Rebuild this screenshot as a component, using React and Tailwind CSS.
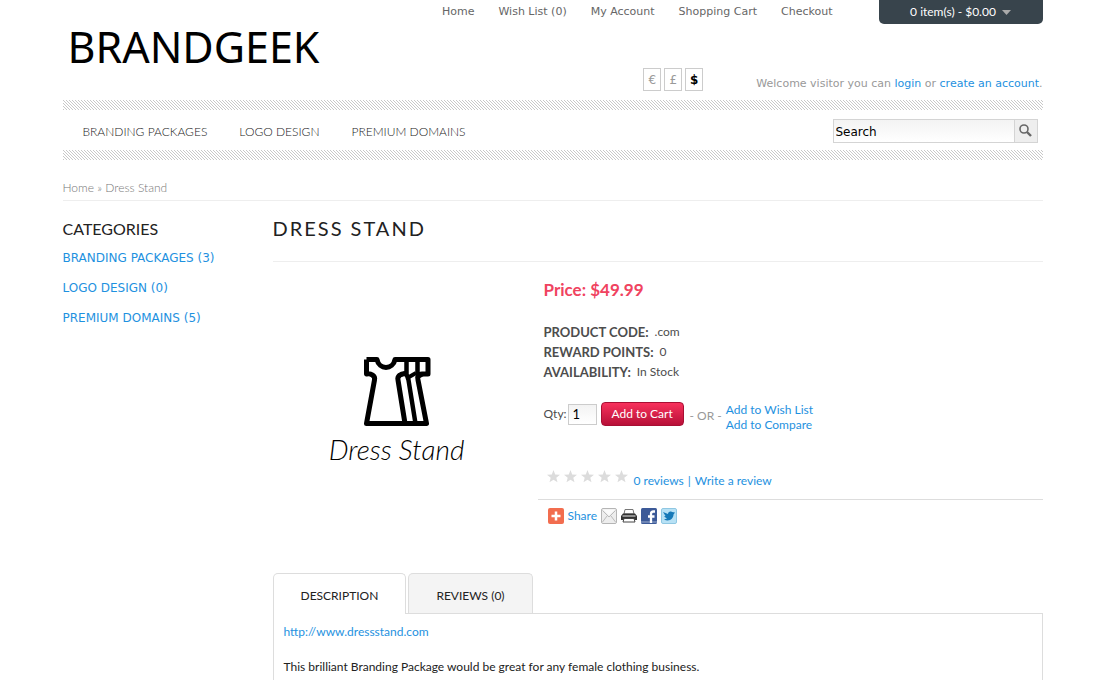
import React, { useState } from 'react';

const topLinks = ['Home', 'Wish List (0)', 'My Account', 'Shopping Cart', 'Checkout'];
const menu = ['BRANDING PACKAGES', 'LOGO DESIGN', 'PREMIUM DOMAINS'];
const categories = ['BRANDING PACKAGES (3)', 'LOGO DESIGN (0)', 'PREMIUM DOMAINS (5)'];
const currencies = ['€', '£', '$'];

// 3px tile, repeated into fine diagonal hatching
const Stripe = () => (
  <div className="h-[10px] bg-[linear-gradient(45deg,#fff_40%,#c8c8c8_40%,#c8c8c8_60%,#fff_60%)] bg-[length:3px_3px]" />
);

const Dress = () => (
  <svg width="68" height="71" viewBox="0 0 68 71" fill="none" stroke="#000" strokeWidth="5" strokeLinejoin="round" aria-hidden="true">
    <path d="M3.500 3.500H14C16 14 30 14 32 3.500H43M43 18C38 17 34 20 35 24L42 67.500H3.500L11.500 24C12.500 20 8 17 3.500 18V3.500" />
    <path d="M32 3.500H65V18H59C55 18 54 20 55 24L63.500 67.500H40" />
    <path d="M43.500 3.500V18C44 20 45 22 45.500 24L52.500 67.500M54.500 3.500V18M35 20L42.500 17" strokeWidth="4.500" />
    <path d="M46 21L53 17M55 21L60 18" strokeWidth="4" />
  </svg>
);

const Star = () => (
  <svg width="13" height="13" viewBox="0 0 13 13" fill="#dcdcdc" aria-hidden="true">
    <path d="M6.500 0L8.200 4.400L13 4.700L9.300 7.700L10.500 12.300L6.500 9.700L2.500 12.300L3.700 7.700L0 4.700L4.800 4.400Z" />
  </svg>
);

const ShareIcons = () => (
  <>
    <a href="#email" aria-label="Email">
      <svg width="16" height="16" viewBox="0 0 16 16">
        <rect x="0.500" y="0.500" width="15" height="15" rx="1.500" fill="#ededed" stroke="#b5b5b5" />
        <path d="M1.500 2.500L8 9L14.500 2.500M1.500 14L6 8M14.500 14L10 8" fill="none" stroke="#bbb" />
        <path d="M2 1.500H14L8 7.500Z" fill="#fafafa" />
      </svg>
    </a>
    <a href="#print" aria-label="Print">
      <svg width="16" height="16" viewBox="0 0 16 16">
        <path d="M4 1.500H12L13 6H3Z" fill="#fff" stroke="#777" />
        <path d="M2 5.500H14L16 8V12H0V8Z" fill="#333" />
        <path d="M1.500 8H14.500" stroke="#eee" />
        <path d="M3 10.500H13L14 14H2Z" fill="#fff" stroke="#444" />
      </svg>
    </a>
    <a href="#facebook" aria-label="Facebook">
      <svg width="16" height="16" viewBox="0 0 16 16">
        <rect width="16" height="16" rx="1.500" fill="#3c5a98" />
        <rect y="13" width="16" height="2" fill="#6d84b4" />
        <path d="M14 3.500H12.500C10.500 3.500 10 4.500 10 6V15M7 8.500H13.500" fill="none" stroke="#fff" strokeWidth="2.300" />
      </svg>
    </a>
    <a href="#twitter" aria-label="Twitter">
      <svg width="16" height="16" viewBox="0 0 16 16">
        <rect x="0.500" y="0.500" width="15" height="15" rx="1.500" fill="#b7e1f5" stroke="#8fc7e2" />
        <path d="M2 4L7 6C7 4 9 3 11 4L14 4.500L12.500 6.500C12.500 11 8 14 3 11.500L6 10.500L3 8.500L4.500 8Z" fill="#1679b8" />
      </svg>
    </a>
  </>
);

const Header = () => {
  const [currency, setCurrency] = useState('$');

  return (
    <header className="flex h-[100px] justify-between">
      <a href="#home" className="ml-[5px] mt-[17px] font-['Noto_Sans'] text-[43px] leading-[60px] text-black">
        BRANDGEEK
      </a>
      <div className="flex flex-col justify-between pb-2">
        <div className="flex justify-end">
          <nav className="mr-[46px] flex gap-6 text-[11px] leading-6 text-[#666]">
            {topLinks.map((label) => (
              <a key={label} href="#top">{label}</a>
            ))}
          </nav>
          <button className="flex h-6 w-[164px] items-center justify-center gap-[6px] rounded-b-[5px] bg-[#38444c] font-[Lato] text-[12px] text-white">
            0 item(s) - $0.00
            <svg width="9" height="5" viewBox="0 0 9 5" fill="#aaa" aria-hidden="true"><path d="M0 0H9L4.500 5Z" /></svg>
          </button>
        </div>
        <div className="flex items-end justify-end gap-[53px]">
          <div className="flex gap-[3px] pb-px">
            {currencies.map((sign) => (
              <button
                key={sign}
                onClick={() => setCurrency(sign)}
                className={`h-[23px] w-[18px] border border-[#ccc] text-[12px] ${
                  currency === sign ? 'font-bold text-black' : 'text-[#999]'
                }`}
              >
                {sign}
              </button>
            ))}
          </div>
          <p className="text-[11px] leading-4 text-[#999]">
            Welcome visitor you can <a href="#login" className="text-[#1e91e0]">login</a> or{' '}
            <a href="#register" className="text-[#1e91e0]">create an account</a>.
          </p>
        </div>
      </div>
    </header>
  );
};

const Details = () => (
  <div className="flex-1 font-[Lato] text-[12px] text-[#4d4d4d]">
    <div className="pl-[6px]">
      <p className="text-[17px] font-bold leading-6 text-[#f0435f]">Price: $49.99</p>
      <dl className="mt-5 leading-5">
        <div className="flex gap-[6px]"><dt className="text-[13px] font-bold">PRODUCT CODE:</dt><dd>.com</dd></div>
        <div className="flex gap-[6px]"><dt className="text-[13px] font-bold">REWARD POINTS:</dt><dd>0</dd></div>
        <div className="flex gap-[6px]"><dt className="text-[13px] font-bold">AVAILABILITY:</dt><dd>In Stock</dd></div>
      </dl>
      <div className="mt-[19px] flex h-[26px] items-center">
        <label htmlFor="qty">Qty:</label>
        <input
          id="qty"
          defaultValue="1"
          className="ml-px h-[21px] w-[29px] border border-[#ccc] bg-linear-to-b from-[#f3f3f3] to-white px-1 text-[13px] text-black"
        />
        <button className="ml-1 h-6 w-[83px] rounded-[4px] border border-[#a80f33] bg-linear-to-b from-[#f8315c] to-[#b80f38] text-[12px] leading-5 text-white">
          Add to Cart
        </button>
        <span className="ml-[6px] pt-1 text-[12px] text-[#999]">- OR -</span>
        <div className="ml-1 flex flex-col pt-[6px] leading-[15px] text-[#1e91e0]">
          <a href="#wish">Add to Wish List</a>
          <a href="#compare">Add to Compare</a>
        </div>
      </div>
      <div className="mt-[43px] flex h-[29px] items-start pl-[3px]">
        <div className="flex gap-1" role="img" aria-label="No rating">
          {[1, 2, 3, 4, 5].map((n) => <Star key={n} />)}
        </div>
        <p className="ml-[6px] pt-[3px] leading-4 text-[#1e91e0]">
          <a href="#reviews">0 reviews</a>
          <span className="mx-1">|</span>
          <a href="#write">Write a review</a>
        </p>
      </div>
    </div>
    <div className="flex items-center gap-1 border-t border-[#ddd] pl-[10px] pt-2 leading-4">
      <a href="#share" className="flex gap-1 text-[#1e91e0]">
        <svg width="16" height="16" viewBox="0 0 16 16" aria-hidden="true">
          <rect width="16" height="16" rx="2" fill="#f26d4f" />
          <path d="M8 3.500V12.500M3.500 8H12.500" stroke="#fff" strokeWidth="2.500" />
        </svg>
        Share
      </a>
      <ShareIcons />
    </div>
  </div>
);

const App = () => {
  const [tab, setTab] = useState('description');

  const tabClass = (name) =>
    `rounded-t-[5px] border border-b-0 border-[#ddd] px-[27px] pt-1 text-[12px] text-[#222] ${
      tab === name ? 'relative -mb-px h-[41px] bg-white' : 'h-10 bg-[#f4f4f4]'
    }`;

  return (
    <div className="min-h-screen bg-white font-['DejaVu_Sans',sans-serif] text-[12px]">
      <div className="mx-auto max-w-[980px]">
        <Header />
        <Stripe />
        <div className="flex h-10 items-center justify-between pl-5 pr-[5px]">
          <nav className="flex gap-8 pt-1 font-[Lato] text-[12px] font-light text-[#222]">
            {menu.map((label) => <a key={label} href="#menu">{label}</a>)}
          </nav>
          <form className="mt-px flex h-6 w-[205px] border border-[#d4d4d4]" onSubmit={(e) => e.preventDefault()}>
            <input
              aria-label="Search"
              defaultValue="Search"
              className="w-[180px] bg-linear-to-b from-[#f3f3f3] to-white px-[2px] pt-[2px] text-[12px] text-black"
            />
            <button aria-label="Search" className="flex flex-1 items-center justify-center border-l border-[#d4d4d4] bg-[#eee]">
              <svg width="13" height="13" viewBox="0 0 13 13" fill="none" stroke="#666" aria-hidden="true">
                <circle cx="5" cy="5" r="4" strokeWidth="1.600" />
                <path d="M8 8L12 12" strokeWidth="2.400" />
              </svg>
            </button>
          </form>
        </div>
        <Stripe />

        <div className="mt-[19px] border-b border-[#eee] pb-[3px] font-[Lato] text-[12px] font-light leading-[18px] text-[#777]">
          <a href="#home">Home</a> » <a href="#product">Dress Stand</a>
        </div>

        <div className="flex">
          <aside className="w-[210px] pt-[17px]">
            <h2 className="font-[Lato] text-[16px] leading-[21px] text-[#222]">CATEGORIES</h2>
            <ul className="mt-1 leading-[30px] text-[#1e91e0]">
              {categories.map((label) => (
                <li key={label}><a href="#category">{label}</a></li>
              ))}
            </ul>
          </aside>

          <main className="min-w-0 flex-1">
            <h1 className="border-b border-[#eee] pb-[19px] pt-[14px] font-[Lato] text-[20px] leading-[27px] tracking-[2px] text-[#222]">
              DRESS STAND
            </h1>
            <div className="flex pt-4">
              <div className="flex w-[265px] flex-col items-center pt-[78px] pr-[17px] text-black">
                <Dress />
                <p className="mt-1 font-[Lato] text-[28px] font-light italic leading-[36px]">Dress Stand</p>
              </div>
              <Details />
            </div>

            <div className="mt-[49px] flex items-end gap-[2px] font-[Lato]" role="tablist">
              <button role="tab" aria-selected={tab === 'description'} onClick={() => setTab('description')} className={tabClass('description')}>
                DESCRIPTION
              </button>
              <button role="tab" aria-selected={tab === 'reviews'} onClick={() => setTab('reviews')} className={tabClass('reviews')}>
                REVIEWS (0)
              </button>
            </div>
            <div className="min-h-[67px] border border-b-0 border-[#ddd] px-[10px] pt-[9px] font-[Lato] leading-[18px] text-[#222]">
              {tab === 'description' ? (
                <>
                  <a href="#site" className="text-[#1e91e0]">http://www.dressstand.com</a>
                  <p className="mt-[17px]">This brilliant Branding Package would be great for any female clothing business.</p>
                </>
              ) : (
                <p>There are no reviews for this product.</p>
              )}
            </div>
          </main>
        </div>
      </div>
    </div>
  );
};

export default App;
